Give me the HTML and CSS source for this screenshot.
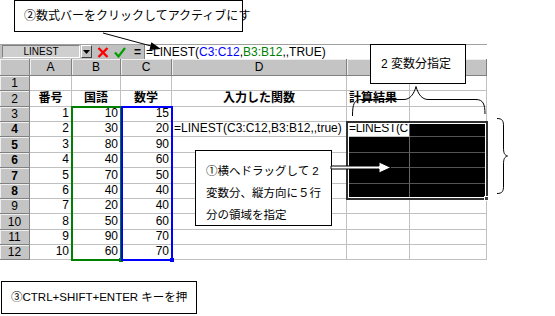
FILE: index.html
```html
<!DOCTYPE html>
<html lang="ja">
<head>
<meta charset="utf-8">
<link rel="stylesheet" href="styles.css">
</head>
<body>
<div class="page">
  <div class="formula-bar">
    <div class="namebox">LINEST</div>
    <div class="dropdown"><svg width="7" height="4" viewBox="0 0 7 4"><polygon points="0,0 7,0 3.5,4" fill="#000"/></svg></div>
    <div class="fx-buttons">
      <svg class="icon-x" width="12" height="11" viewBox="0 0 12 11"><path d="M1.5 1 L10.5 10 M10.5 1 L1.5 10" stroke="#ff0000" stroke-width="2.4" fill="none"/></svg>
      <svg class="icon-ok" width="12" height="11" viewBox="0 0 12 11"><path d="M1 5.5 L4.5 9.5 L11 1" stroke="#00a000" stroke-width="2.2" fill="none"/></svg>
      <span class="eq">=</span>
    </div>
    <div class="formula">=LINEST(<span class="ref-blue">C3:C12</span>,<span class="ref-green">B3:B12</span>,,TRUE)</div>
  </div>

  <div class="sheet">
    <div class="h corner"></div><div class="h">A</div><div class="h">B</div><div class="h">C</div><div class="h">D</div><div class="h sel"></div><div class="h sel"></div>

    <div class="h rh">1</div><div class="c"></div><div class="c"></div><div class="c"></div><div class="c"></div><div class="c"></div><div class="c"></div>
    <div class="h rh">2</div><div class="c ctr b">番号</div><div class="c ctr b">国語</div><div class="c ctr b">数学</div><div class="c ctr b">入力した関数</div><div class="c left b">計算結果</div><div class="c"></div>
    <div class="h rh">3</div><div class="c">1</div><div class="c">10</div><div class="c">15</div><div class="c"></div><div class="c"></div><div class="c"></div>
    <div class="h rh sel">4</div><div class="c">2</div><div class="c">30</div><div class="c">20</div><div class="c left">=LINEST(C3:C12,B3:B12,,true)</div><div class="c left active">=LINEST(C</div><div class="c dark"></div>
    <div class="h rh sel">5</div><div class="c">3</div><div class="c">80</div><div class="c">90</div><div class="c"></div><div class="c dark"></div><div class="c dark"></div>
    <div class="h rh sel">6</div><div class="c">4</div><div class="c">40</div><div class="c">60</div><div class="c"></div><div class="c dark"></div><div class="c dark"></div>
    <div class="h rh sel">7</div><div class="c">5</div><div class="c">70</div><div class="c">50</div><div class="c"></div><div class="c dark"></div><div class="c dark"></div>
    <div class="h rh sel">8</div><div class="c">6</div><div class="c">40</div><div class="c">40</div><div class="c"></div><div class="c dark"></div><div class="c dark"></div>
    <div class="h rh">9</div><div class="c">7</div><div class="c">20</div><div class="c">40</div><div class="c"></div><div class="c"></div><div class="c"></div>
    <div class="h rh">10</div><div class="c">8</div><div class="c">50</div><div class="c">60</div><div class="c"></div><div class="c"></div><div class="c"></div>
    <div class="h rh">11</div><div class="c">9</div><div class="c">90</div><div class="c">70</div><div class="c"></div><div class="c"></div><div class="c"></div>
    <div class="h rh">12</div><div class="c">10</div><div class="c">60</div><div class="c">70</div><div class="c"></div><div class="c"></div><div class="c"></div>
  </div>

  <div class="range range-green"><span class="handle handle-green"></span></div>
  <div class="range range-blue"><span class="handle handle-blue"></span></div>
  <div class="selection"><span class="fill-handle"></span></div>

  <div class="callout callout-top">②数式バーをクリックしてアクティブにす</div>
  <div class="callout callout-vars">2 変数分指定</div>
  <div class="callout callout-drag">
    <p>①横へドラッグして 2</p>
    <p>変数分、縦方向に５行</p>
    <p>分の領域を指定</p>
  </div>
  <div class="callout callout-enter">③CTRL+SHIFT+ENTER キーを押</div>

  <svg class="annotations" width="555" height="316" viewBox="0 0 555 316">
    <line x1="103" y1="33" x2="151" y2="46" stroke="#000" stroke-width="1"/>
    <polygon points="161,49 149.4,50.1 151.4,42.3" fill="#000"/>
    <polygon points="331,166 379,166 379,162 391,167.5 379,173 379,169 331,169" fill="#fff" stroke="#000" stroke-width="1"/>
    <path d="M352.5 116 C352.5 104 354 99.5 362 99.5 L404 99.5 C410 99.5 414 94 416 86.5 C418 94 422 99.5 428 99.5 L476 99.5 C483 99.5 485 104 485 114" fill="none" stroke="#000" stroke-width="1"/>
    <path d="M497 118.5 C502.5 118.5 503.5 121 503.5 126 L503.5 148 C503.5 153 504.5 155 507.5 156 C504.5 157 503.5 159 503.5 164 L503.5 186 C503.5 191 502.5 193.5 497 193.5" fill="none" stroke="#000" stroke-width="1"/>
  </svg>
</div>
</body>
</html>
```

FILE: styles.css
```css
* { box-sizing: border-box; }
html, body { margin: 0; padding: 0; background: #fff; }
body {
  font-family: "Liberation Sans", "Noto Sans CJK JP", sans-serif;
  color: #000;
}
.page {
  position: relative;
  width: 555px;
  height: 316px;
  overflow: hidden;
}

/* formula bar */
.formula-bar {
  margin-top: 44px;
  width: 487px;
  height: 15px;
  display: flex;
  background: #c0c0c0;
  border-top: 1px solid #a0a0a0;
}
.namebox {
  margin-left: 2px;
  width: 78px;
  height: 13px;
  background: #cfcfcf;
  border: 1px solid #808080;
  border-right-color: #fff;
  border-bottom-color: #fff;
  font-size: 10px;
  line-height: 11px;
  text-align: center;
}
.dropdown {
  width: 11px;
  height: 13px;
  margin-left: 1px;
  background: #c0c0c0;
  border: 1px solid #fff;
  border-right-color: #404040;
  border-bottom-color: #404040;
  display: flex;
  align-items: center;
  justify-content: center;
}
.fx-buttons {
  width: 52px;
  display: flex;
  align-items: center;
  padding-left: 5px;
  gap: 5px;
}
.eq {
  font-size: 12px;
  font-weight: bold;
  line-height: 12px;
  margin-left: 3px;
}
.formula {
  flex: 1;
  background: #fff;
  border-left: 1px solid #808080;
  padding-left: 1px;
  font-size: 12px;
  line-height: 14px;
  white-space: nowrap;
}
.ref-blue { color: #0000ff; }
.ref-green { color: #008000; }

/* sheet grid */
.sheet {
  display: grid;
  grid-template-columns: 30px 42px 49px 51px 175px 63px 77px;
  grid-template-rows: 17px 15px 16px 15px 15px 16px 15px 16px 15px 15px 16px 15px 15px;
  width: 487px;
}
.h {
  background: #c4c4c4;
  border-right: 1px solid #808080;
  border-bottom: 1px solid #808080;
  box-shadow: inset 1px 1px 0 #efefef;
  font-size: 12px;
  line-height: 14px;
  display: flex;
  align-items: center;
  justify-content: center;
  color: #000;
}
.h.sel { font-weight: bold; }
.corner { background: #c4c4c4; }
.c {
  border-right: 1px solid #c0c0c0;
  border-bottom: 1px solid #c0c0c0;
  font-size: 12px;
  line-height: 13px;
  display: flex;
  align-items: flex-end;
  justify-content: flex-end;
  padding: 0 2px 1px 2px;
  white-space: nowrap;
  overflow: hidden;
}
.c.ctr { justify-content: center; }
.c.left { justify-content: flex-start; }
.c.b { font-weight: bold; font-size: 12px; }
.c.dark {
  background: #000;
  border-bottom-color: #555;
  border-right-color: #666;
}
.c.active {
  background: #fff;
  border-right-color: #666;
  padding-left: 2px;
  padding-right: 0;
  letter-spacing: -0.3px;
}

/* overlays */
.range {
  position: absolute;
  top: 106px;
  height: 155px;
  border: 2px solid;
}
.range-green { left: 71px; width: 51px; border-color: #008000; }
.range-blue { left: 121px; width: 52px; border-color: #0000ff; }
.handle {
  position: absolute;
  right: -3px;
  bottom: -3px;
  width: 4px;
  height: 4px;
}
.handle-green { background: #008000; }
.handle-blue { background: #0000ff; }

.selection {
  position: absolute;
  left: 346px;
  top: 121px;
  width: 142px;
  height: 79px;
  border: 2px solid #303030;
  box-shadow: inset 0 0 0 1px #fff;
}
.fill-handle {
  position: absolute;
  right: -3px;
  bottom: -3px;
  width: 5px;
  height: 5px;
  background: #404040;
  border: 1px solid #fff;
}

.callout {
  position: absolute;
  background: #fff;
  border: 1px solid #000;
  font-family: "Liberation Sans", "Noto Sans CJK JP", sans-serif;
}
.callout-top {
  left: 14px;
  top: 0;
  width: 229px;
  height: 32px;
  font-size: 12px;
  line-height: 30px;
  padding-left: 9px;
  white-space: nowrap;
}
.callout-vars {
  left: 370px;
  top: 44px;
  width: 96px;
  height: 40px;
  font-size: 12px;
  line-height: 38px;
  padding-left: 10px;
  white-space: nowrap;
}
.callout-drag {
  left: 195px;
  top: 150px;
  width: 137px;
  height: 76px;
  font-size: 11.5px;
  padding: 9px 0 0 10px;
}
.callout-drag p {
  margin: 0;
  height: 22px;
  line-height: 22px;
  white-space: nowrap;
}
.callout-enter {
  left: 1px;
  top: 281px;
  width: 196px;
  height: 33px;
  font-size: 11.5px;
  line-height: 31px;
  padding-left: 9px;
  white-space: nowrap;
}
.annotations {
  position: absolute;
  left: 0;
  top: 0;
  pointer-events: none;
}
```
